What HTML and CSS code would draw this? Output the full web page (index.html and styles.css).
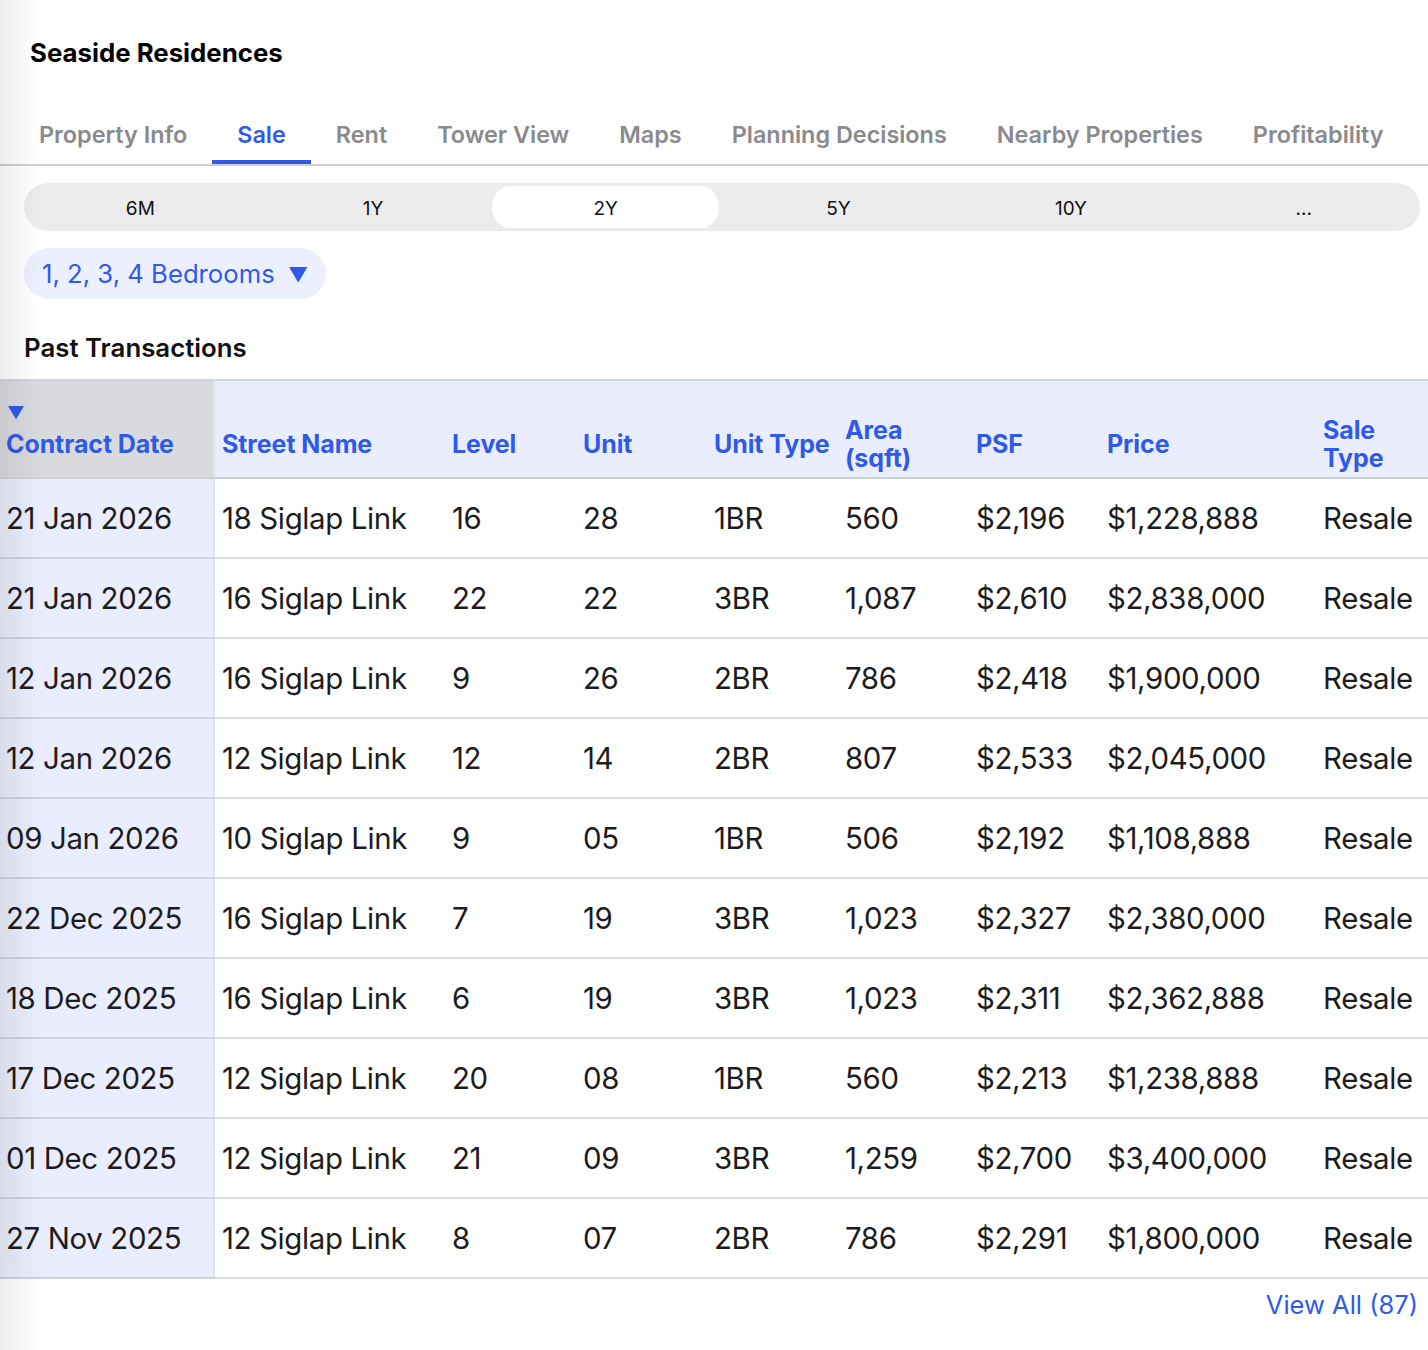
FILE: index.html
```html
<!DOCTYPE html>
<html>
<head>
<meta charset="utf-8">
<link rel="stylesheet" href="styles.css">
</head>
<body>
<div class="page">
  <h1 class="title">Seaside Residences</h1>
  <nav class="tabs">
    <span class="tab">Property Info</span>
    <span class="tab active">Sale</span>
    <span class="tab">Rent</span>
    <span class="tab">Tower View</span>
    <span class="tab">Maps</span>
    <span class="tab">Planning Decisions</span>
    <span class="tab">Nearby Properties</span>
    <span class="tab">Profitability</span>
  </nav>
  <div class="segments">
    <span class="seg">6M</span>
    <span class="seg">1Y</span>
    <span class="seg selected">2Y</span>
    <span class="seg">5Y</span>
    <span class="seg">10Y</span>
    <span class="seg">...</span>
  </div>
  <div class="filter-row">
    <span class="pill">1, 2, 3, 4 Bedrooms <span class="caret">▼</span></span>
  </div>
  <h2 class="section">Past Transactions</h2>
  <table class="tx">
    <colgroup>
      <col class="c-date"><col class="c-street"><col class="c-sm"><col class="c-sm"><col class="c-sm"><col class="c-sm"><col class="c-sm"><col class="c-price"><col class="c-type">
    </colgroup>
    <thead>
      <tr>
        <th class="first sorted"><span class="sort">▼</span>Contract Date</th>
        <th>Street Name</th>
        <th>Level</th>
        <th>Unit</th>
        <th>Unit Type</th>
        <th>Area<br>(sqft)</th>
        <th>PSF</th>
        <th>Price</th>
        <th>Sale<br>Type</th>
      </tr>
    </thead>
    <tbody>
      <tr><td class="first">21 Jan 2026</td><td>18 Siglap Link</td><td>16</td><td>28</td><td>1BR</td><td>560</td><td>$2,196</td><td>$1,228,888</td><td>Resale</td></tr>
      <tr><td class="first">21 Jan 2026</td><td>16 Siglap Link</td><td>22</td><td>22</td><td>3BR</td><td>1,087</td><td>$2,610</td><td>$2,838,000</td><td>Resale</td></tr>
      <tr><td class="first">12 Jan 2026</td><td>16 Siglap Link</td><td>9</td><td>26</td><td>2BR</td><td>786</td><td>$2,418</td><td>$1,900,000</td><td>Resale</td></tr>
      <tr><td class="first">12 Jan 2026</td><td>12 Siglap Link</td><td>12</td><td>14</td><td>2BR</td><td>807</td><td>$2,533</td><td>$2,045,000</td><td>Resale</td></tr>
      <tr><td class="first">09 Jan 2026</td><td>10 Siglap Link</td><td>9</td><td>05</td><td>1BR</td><td>506</td><td>$2,192</td><td>$1,108,888</td><td>Resale</td></tr>
      <tr><td class="first">22 Dec 2025</td><td>16 Siglap Link</td><td>7</td><td>19</td><td>3BR</td><td>1,023</td><td>$2,327</td><td>$2,380,000</td><td>Resale</td></tr>
      <tr><td class="first">18 Dec 2025</td><td>16 Siglap Link</td><td>6</td><td>19</td><td>3BR</td><td>1,023</td><td>$2,311</td><td>$2,362,888</td><td>Resale</td></tr>
      <tr><td class="first">17 Dec 2025</td><td>12 Siglap Link</td><td>20</td><td>08</td><td>1BR</td><td>560</td><td>$2,213</td><td>$1,238,888</td><td>Resale</td></tr>
      <tr><td class="first">01 Dec 2025</td><td>12 Siglap Link</td><td>21</td><td>09</td><td>3BR</td><td>1,259</td><td>$2,700</td><td>$3,400,000</td><td>Resale</td></tr>
      <tr><td class="first">27 Nov 2025</td><td>12 Siglap Link</td><td>8</td><td>07</td><td>2BR</td><td>786</td><td>$2,291</td><td>$1,800,000</td><td>Resale</td></tr>
    </tbody>
  </table>
  <div class="more"><a class="view-all">View All (87)</a></div>
  <div class="edge-shade"></div>
</div>
</body>
</html>
```
FILE: styles.css
```css
* { box-sizing: border-box; }
html, body { margin: 0; padding: 0; background: #fff; }
body {
  font-family: Inter, "Noto Sans", "Liberation Sans", sans-serif;
  color: #1c1c1e;
  width: 1428px;
  overflow: hidden;
}
.page { position: relative; min-height: 1350px; }
.title {
  margin: 0;
  padding: 37px 0 0 30px;
  height: 78px;
  font-size: 25.8px;
  font-weight: 700;
  color: #000;
  line-height: 32px;
}
.tabs {
  display: flex;
  gap: 0;
  padding-left: 14px;
  margin-top: 24px;
  border-bottom: 2px solid #cfcfd1;
  height: 64px;
  white-space: nowrap;
  overflow: hidden;
}
.tab {
  flex: 0 0 auto;
  white-space: nowrap;
  padding: 0 25px;
  font-size: 23.4px;
  font-weight: 600;
  color: #8a8a8e;
  margin-bottom: -2px;
  border-bottom: 4px solid transparent;
  margin-top: 2px;
  height: 60px;
  line-height: 62px;
}
.tab.active { color: #2f5ae8; border-bottom-color: #2f5ae8; }
.segments {
  display: flex;
  margin: 17px 8px 0 24px;
  height: 48px;
  background: #ececec;
  border-radius: 24px;
  padding: 3px 0;
}
.seg {
  flex: 1;
  text-align: center;
  font-size: 19px;
  line-height: 46px;
  color: #111;
  padding: 0 3px;
  border-radius: 24px;
  background-clip: content-box;
}
.seg.selected { background-color: #fff; }
.filter-row { padding: 17px 0 0 24px; height: 68px; }
.pill {
  display: inline-block;
  height: 51px;
  line-height: 51px;
  padding: 0 18px 0 18px;
  background: #eceffd;
  border-radius: 26px;
  color: #2f5ae8;
  font-size: 25.7px;
}
.caret { font-size: 20px; margin-left: 6px; vertical-align: 1px; }
.section {
  margin: 0;
  padding: 31px 0 0 24px;
  height: 80px;
  font-size: 25.8px;
  font-weight: 600;
  line-height: 36px;
  color: #111;
}
.tx {
  width: 1428px;
  table-layout: fixed;
  border-collapse: collapse;
  border-top: 2px solid #d3d5de;
}
.c-date { width: 214px; }
.c-street { width: 231px; }
.c-sm { width: 131px; }
.c-price { width: 216px; }
.c-type { width: 112px; }
thead th {
  background: #eaedfd;
  color: #2f5ae8;
  font-size: 25px;
  font-weight: 700;
  text-align: left;
  height: 98px;
  padding: 30px 4px 0 7px;
  line-height: 28px;
  vertical-align: middle;
  border-bottom: 2px solid #cfd0d6;
  letter-spacing: -0.1px;
  white-space: nowrap;
}
thead th.first {
  background: #d9dadd;
  padding-left: 6px;
  position: relative;
  border-right: 2px solid #e1e3ef;
}
.sort {
  position: absolute;
  left: 7px;
  top: 22px;
  font-size: 17px;
  line-height: 20px;
}
tbody td {
  height: 80px;
  font-size: 29.4px;
  line-height: 34px;
  padding: 2px 4px 0 7px;
  border-bottom: 2px solid #dcdcde;
  white-space: nowrap;
  letter-spacing: -0.35px;
  color: #1c1c1e;
}
tbody td.first {
  background: #eaedfd;
  padding-left: 6px;
  border-right: 2px solid #dfe2f2;
  border-bottom-color: #cfd2de;
}
.more {
  text-align: right;
  padding: 10px 10px 0 0;
}
.view-all {
  font-size: 25.5px;
  color: #2f5ae8;
  line-height: 32px;
}
.edge-shade {
  position: absolute;
  top: 0; left: 0; bottom: 0;
  width: 40px;
  background: linear-gradient(to right, rgba(0,0,0,0.07), rgba(0,0,0,0));
  pointer-events: none;
}
```
